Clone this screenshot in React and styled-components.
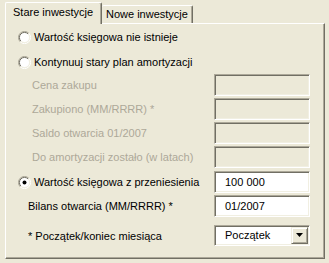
import styled, { createGlobalStyle } from "styled-components"

const Global = createGlobalStyle`
  html, body { margin: 0; padding: 0; background: #ece9d8; }
  body { font-family: "Liberation Sans", Arial, sans-serif; font-size: 11px; color: #000; }
`

const Window = styled.div`
  width: 329px;
  height: 263px;
  box-sizing: border-box;
  padding: 3px 4px 4px 5px;
  display: flex;
  flex-direction: column;
  background: #ece9d8;
`

const TabStrip = styled.div`
  display: flex;
  align-items: flex-end;
  height: 21px;
  position: relative;
  z-index: 1;
  margin-bottom: -1px;
`

const Tab = styled.div`
  box-sizing: border-box;
  height: ${p => (p.$active ? 22 : 18)}px;
  width: ${p => p.$width}px;
  padding: ${p => (p.$active ? "3px 0 0 7px" : "2px 0 0 4px")};
  background: #ece9d8;
  border-top: 1px solid #fff;
  border-left: ${p => (p.$active ? "1px solid #fff" : "none")};
  border-right: 1px solid #716f64;
  box-shadow: inset -1px 0 0 #aca899;
  border-radius: 2px 2px 0 0;
  white-space: nowrap;
  margin-bottom: ${p => (p.$active ? 0 : 1)}px;
`

const Panel = styled.div`
  flex: 1;
  box-sizing: border-box;
  border-top: 1px solid #fff;
  border-left: 1px solid #fff;
  border-right: 1px solid #716f64;
  border-bottom: 1px solid #716f64;
  box-shadow: inset -1px -1px 0 #aca899;
  padding: 2px 14px 0 0;
  display: flex;
  flex-direction: column;
`

const Row = styled.div`
  display: grid;
  grid-template-columns: 1fr 96px;
  align-items: center;
  height: ${p => p.$h || 22}px;
  margin-top: ${p => p.$mt || 0}px;
  padding-left: ${p => p.$indent}px;
`

const Label = styled.span`
  color: ${p => (p.$disabled ? "#aca899" : "#000")};
  white-space: nowrap;
`

const RadioLabel = styled.label`
  display: flex;
  align-items: center;
  gap: 3px;
  white-space: nowrap;
`

const Field = styled.div`
  box-sizing: border-box;
  height: ${p => p.$h || 22}px;
  background: ${p => (p.$disabled ? "#ece9d8" : "#fff")};
  border-top: 1px solid #aca899;
  border-left: 1px solid #aca899;
  border-right: 1px solid #fff;
  border-bottom: 1px solid #fff;
  box-shadow: inset 1px 1px 0 #716f64, inset -1px -1px 0 #f1efe2;
  padding: 0 0 1px 10px;
  display: flex;
  align-items: center;
  justify-content: space-between;
`

const DropButton = styled.div`
  box-sizing: border-box;
  width: 17px;
  height: 17px;
  margin-right: 1px;
  background: #ece9d8;
  border-top: 1px solid #f1efe2;
  border-left: 1px solid #f1efe2;
  border-right: 1px solid #716f64;
  border-bottom: 1px solid #716f64;
  box-shadow: inset 1px 1px 0 #fff, inset -1px -1px 0 #aca899;
  display: flex;
  align-items: center;
  justify-content: center;
`

const Radio = ({ checked }) => (
  <svg width="13" height="13" viewBox="0 0 13 13">
    <circle cx="6.5" cy="6.5" r="5" fill="#fff" />
    <path d="M2.2 10.8 A6 6 0 0 1 10.8 2.2" fill="none" stroke="#aca899" strokeWidth="1" />
    <path d="M2.9 10.1 A5 5 0 0 1 10.1 2.9" fill="none" stroke="#716f64" strokeWidth="1" />
    <path d="M10.8 2.2 A6 6 0 0 1 2.2 10.8" fill="none" stroke="#fff" strokeWidth="1" />
    <path d="M10.1 2.9 A5 5 0 0 1 2.9 10.1" fill="none" stroke="#f1efe2" strokeWidth="1" />
    {checked && <circle cx="6.5" cy="6.5" r="2" fill="#000" />}
  </svg>
)

const Arrow = () => (
  <svg width="7" height="4" viewBox="0 0 7 4">
    <path d="M0 0 H7 L3.5 4 Z" fill="#000" />
  </svg>
)

const disabledRows = [
  "Cena zakupu",
  "Zakupiono (MM/RRRR) *",
  "Saldo otwarcia 01/2007",
  "Do amortyzacji zostało (w latach)",
]

export default function App() {
  return (
    <Window>
      <Global />
      <TabStrip>
        <Tab $active $width={97}>Stare inwestycje</Tab>
        <Tab $width={91}>Nowe inwestycje</Tab>
      </TabStrip>
      <Panel>
        <Row $indent={12}>
          <RadioLabel><Radio />Wartość księgowa nie istnieje</RadioLabel>
        </Row>
        <Row $indent={12} $mt={3}>
          <RadioLabel><Radio />Kontynuuj stary plan amortyzacji</RadioLabel>
        </Row>
        {disabledRows.map((t, i) => (
          <Row key={t} $indent={26} $mt={i === 0 ? 1 : 2}>
            <Label $disabled>{t}</Label>
            <Field $disabled />
          </Row>
        ))}
        <Row $indent={12} $mt={3}>
          <RadioLabel><Radio checked />Wartość księgowa z przeniesienia</RadioLabel>
          <Field>100 000</Field>
        </Row>
        <Row $indent={22} $mt={2}>
          <Label>Bilans otwarcia (MM/RRRR) *</Label>
          <Field>01/2007</Field>
        </Row>
        <Row $indent={22} $mt={8} $h={21}>
          <Label>* Początek/koniec miesiąca</Label>
          <Field $h={21}>
            Początek
            <DropButton><Arrow /></DropButton>
          </Field>
        </Row>
      </Panel>
    </Window>
  )
}
